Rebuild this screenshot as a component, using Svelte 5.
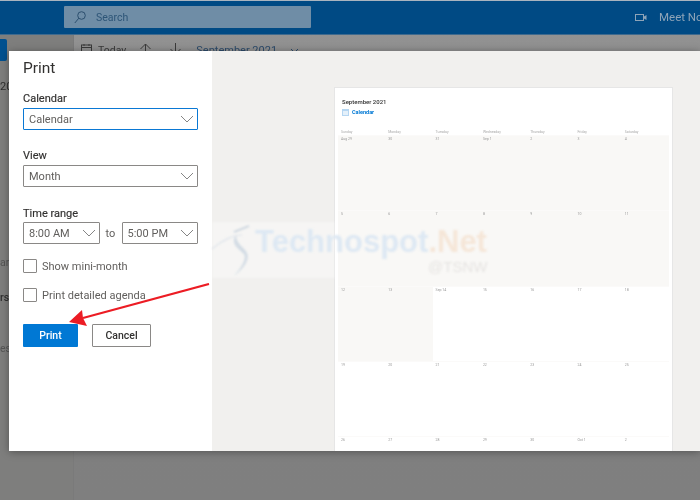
<script>
  const weekdays = ['Sunday', 'Monday', 'Tuesday', 'Wednesday', 'Thursday', 'Friday', 'Saturday'];
  const labels = [
    'Aug 29', '30', '31', 'Sep 1', '2', '3', '4',
    '5', '6', '7', '8', '9', '10', '11',
    '12', '13', 'Sep 14', '15', '16', '17', '18',
    '19', '20', '21', '22', '23', '24', '25',
    '26', '27', '28', '29', '30', 'Oct 1', '2'
  ];
  // days before today are shaded in the preview
  const days = labels.map((label, i) => ({ label, past: i < 16 }));
</script>

{#snippet chevron()}
  <svg class="chev" width="14" height="8" viewBox="0 0 14 8"><path d="M1 1l6 6 6-6" fill="none" stroke="#858585" stroke-width="1"/></svg>
{/snippet}

<div class="screen">
  <header class="topbar">
    <div class="search">
      <svg width="12" height="13" viewBox="0 0 12 13"><circle cx="7.5" cy="4.5" r="3.8" fill="none" stroke="#2c4f6e" stroke-width="1"/><path d="M4.8 7.2L0.8 12" stroke="#2c4f6e" stroke-width="1"/></svg>
      <span>Search</span>
    </div>
    <div class="meet">
      <svg width="12" height="9" viewBox="0 0 12 9"><rect x="0.5" y="1.5" width="8" height="6" fill="none" stroke="#8ea4b8"/><path d="M9 3.5l2.5-1.5v5L9 5.5z" fill="#8ea4b8"/></svg>
      <span>Meet Now</span>
    </div>
  </header>

  <div class="behind">
    <aside class="side">
      <div class="side-btn"></div>
      <span class="frag f1">20</span>
      <span class="frag f2">ar</span>
      <span class="frag f3">rs</span>
      <span class="frag f4">es</span>
    </aside>
    <div class="toolbar">
      <svg class="t-cal" width="11" height="12" viewBox="0 0 11 12"><rect x="0.5" y="2" width="10" height="9" fill="none" stroke="#3a3a3a"/><path d="M0.5 4.5h10M3 1v2M8 1v2" stroke="#3a3a3a"/></svg>
      <span class="today">Today</span>
      <svg class="t-up" width="11" height="12" viewBox="0 0 11 12"><path d="M5.5 12V1M0.5 6l5-5 5 5" fill="none" stroke="#3a3a3a"/></svg>
      <svg class="t-down" width="11" height="12" viewBox="0 0 11 12"><path d="M5.5 0v11M0.5 6l5 5 5-5" fill="none" stroke="#3a3a3a"/></svg>
      <span class="month">September 2021</span>
      <svg class="t-chev" width="9" height="6" viewBox="0 0 9 6"><path d="M1 1l3.5 3.5L8 1" fill="none" stroke="#2d4b6a"/></svg>
    </div>
  </div>

  <div class="modal">
    <form class="panel">
      <h1>Print</h1>

      <div class="label cal-label">Calendar</div>
      <div class="select focused"><span>Calendar</span>{@render chevron()}</div>

      <div class="label view-label">View</div>
      <div class="select"><span>Month</span>{@render chevron()}</div>

      <div class="label range-label">Time range</div>
      <div class="range">
        <div class="select"><span>8:00 AM</span>{@render chevron()}</div>
        <span class="to">to</span>
        <div class="select"><span>5:00 PM</span>{@render chevron()}</div>
      </div>

      <div class="check first"><i></i><span>Show mini-month</span></div>
      <div class="check"><i></i><span>Print detailed agenda</span></div>

      <div class="buttons">
        <button type="button" class="primary">Print</button>
        <button type="button" class="cancel">Cancel</button>
      </div>
    </form>

    <section class="preview">
      <div class="sheet">
        <div class="sheet-title">September 2021</div>
        <div class="sheet-cal">
          <svg width="7" height="7" viewBox="0 0 7 7"><rect width="7" height="7" fill="#b5d6f2"/><rect x="1" y="2" width="5" height="4" fill="#e4f0fa"/></svg>
          <span>Calendar</span>
        </div>
        <div class="weekdays">
          {#each weekdays as w}<span>{w}</span>{/each}
        </div>
        <div class="grid">
          {#each days as d}
            <div class="day" class:past={d.past}>{d.label}</div>
          {/each}
        </div>
      </div>
    </section>
  </div>

  <div class="watermark">
    <div class="wm-band"></div>
    <svg width="50" height="56" viewBox="0 0 50 56">
      <path d="M0 27C10 18 22 13 30 13" fill="none" stroke="#dde3ea" stroke-width="1.2"/>
      <path d="M37 4L22 10" fill="none" stroke="#c6d1dc" stroke-width="1.6"/>
      <path d="M24 13c-6 9 2 13 8 19 3 5-3 14-10 22 9-7 16-16 13-23-3-6-11-9-11-18z" fill="#d2dbe4"/>
    </svg>
    <span class="wm-text"><b class="wm-blue">Technospot</b><b class="wm-orange">.Net</b></span>
    <span class="wm-handle">@TSNW</span>
  </div>

  <svg class="arrow" width="150" height="60" viewBox="0 0 150 60">
    <path d="M140 1L14 35" stroke="#ec1c24" stroke-width="2.2" fill="none"/>
    <path d="M0 39L13 27L14 35L18 43z" fill="#ec1c24"/>
  </svg>
</div>

<style>
  :global(body) {
    margin: 0;
  }

  .screen {
    position: relative;
    width: 700px;
    height: 500px;
    overflow: hidden;
    background: #858585;
    font-family: Roboto, "Open Sans", sans-serif;
    color: #3b3a39;
    filter: blur(0.35px);
  }

  .topbar {
    box-sizing: border-box;
    height: 35px;
    background: #004a84;
    display: flex;
    align-items: center;
    justify-content: space-between;
    padding: 0 0 0 64px;
    border-top: 1px solid #a9b4bf;
    border-bottom: 1px solid #3f6a8e;
  }

  .search {
    width: 247px;
    height: 22px;
    background: #6f8da6;
    border-radius: 1px;
    display: flex;
    align-items: center;
    gap: 10px;
    padding-left: 10px;
    box-sizing: border-box;
    font-size: 10.5px;
    color: #2d5577;
    margin-top: -1px;
  }

  .meet {
    display: flex;
    align-items: center;
    gap: 12px;
    font-size: 11.5px;
    color: #8ea4b8;
    white-space: nowrap;
    width: 65px;
    overflow: hidden;
    flex: none;
    margin-top: -1px;
  }

  .meet svg {
    flex: none;
  }

  .behind {
    display: flex;
    height: 465px;
  }

  .side {
    position: relative;
    width: 73px;
    background: #7e7e7d;
    border-right: 1px solid #7a7a7a;
    flex: none;
  }

  .side-btn {
    position: absolute;
    left: 0;
    top: 4px;
    width: 7px;
    height: 22px;
    background: #00508f;
    border-radius: 0 2px 2px 0;
  }

  .frag {
    position: absolute;
    left: 0;
    font-size: 10.5px;
    color: #2f2f2f;
  }

  .f1 { top: 45px; font-size: 11px; }
  .f2 { top: 221px; color: #555; }
  .f3 { top: 256px; font-weight: 500; }
  .f4 { top: 307px; color: #555; }

  .toolbar {
    flex: 1;
    background: linear-gradient(#929292, #8a8a8a 60px, #808080 110px, #7f7f7f);
    display: flex;
    align-items: flex-start;
    padding: 8px 0 0 7px;
    font-size: 10.5px;
    color: #3a3a3a;
  }

  .today { margin-left: 6px; line-height: 12px; margin-top: 2px; }
  .t-up { margin-left: 14px; }
  .t-down { margin-left: 19px; }
  .month { margin-left: 15px; color: #2d4b6a; line-height: 12px; margin-top: 2px; font-size: 11px; }
  .t-chev { margin-left: 13px; margin-top: 5px; }

  .modal {
    position: absolute;
    left: 9px;
    top: 51px;
    width: 691px;
    height: 400px;
    display: flex;
    background: #f1f0ee;
    box-shadow: 0 1px 8px rgba(0, 0, 0, 0.35);
  }

  .panel {
    width: 203px;
    flex: none;
    background: #fff;
    box-sizing: border-box;
    padding: 7px 14px 0;
  }

  h1 {
    margin: 0;
    font-size: 15.5px;
    font-weight: 400;
    line-height: 20px;
    color: #323130;
  }

  .label {
    font-size: 11px;
    font-weight: 400;
    line-height: 14px;
    color: #323130;
    -webkit-text-stroke: 0.15px #323130;
  }

  .cal-label { margin-top: 14px; margin-bottom: 2px; }
  .view-label { margin-top: 19px; margin-bottom: 2px; }
  .range-label { margin-top: 20px; margin-bottom: 1px; }

  .select {
    height: 22px;
    box-sizing: border-box;
    border: 1px solid #8a8886;
    border-radius: 1px;
    display: flex;
    align-items: center;
    justify-content: space-between;
    padding: 0 3px 0 5px;
    font-size: 11px;
    color: #605e5c;
    background: #fff;
  }

  .select.focused {
    border: 1.5px solid #0a78d4;
  }

  .chev { flex: none; }

  .range {
    display: flex;
    align-items: center;
  }

  .range .select {
    flex: 1;
  }

  .to {
    width: 22px;
    text-align: center;
    font-size: 11px;
    color: #605e5c;
  }

  .check {
    display: flex;
    align-items: center;
    gap: 5px;
    height: 14px;
    margin-top: 15px;
    font-size: 11px;
    color: #605e5c;
  }

  .check i {
    width: 12px;
    height: 12px;
    border: 1px solid #8a8886;
    border-radius: 1px;
    flex: none;
  }

  .buttons {
    display: flex;
    gap: 14px;
    margin-top: 22px;
  }

  button {
    height: 23px;
    border-radius: 1px;
    font-family: inherit;
    font-size: 10.5px;
    font-weight: 500;
    padding: 0;
  }

  .primary {
    width: 55px;
    background: #0078d4;
    border: none;
    color: #fff;
  }

  .cancel {
    width: 59px;
    background: #fff;
    border: 1px solid #8a8886;
    color: #323130;
  }

  .preview {
    flex: 1;
    min-width: 0;
    overflow: hidden;
    padding: 36px 0 0 122px;
    box-sizing: border-box;
  }

  .sheet {
    width: 339px;
    height: 364px;
    box-sizing: border-box;
    background: #fff;
    border: 1px solid #e6e6e6;
    border-bottom: none;
    padding: 10px 3px 0;
    overflow: hidden;
  }

  .sheet-title {
    font-size: 6px;
    font-weight: 500;
    color: #333;
    padding-left: 4px;
    line-height: 8px;
  }

  .sheet-cal {
    display: flex;
    align-items: center;
    gap: 3px;
    padding-left: 4px;
    margin-top: 2px;
    font-size: 5.5px;
    font-weight: 700;
    color: #0078d4;
    line-height: 8px;
  }

  .weekdays {
    display: grid;
    grid-template-columns: repeat(7, 47.3px);
    margin-top: 13px;
  }

  .weekdays span {
    font-size: 3.5px;
    color: #aaa;
    line-height: 6px;
    padding-left: 3px;
  }

  .grid {
    display: grid;
    grid-template-columns: repeat(7, 47.3px);
    grid-auto-rows: 75.3px;
  }

  .day {
    font-size: 3.5px;
    color: #999;
    padding: 1px 3px;
    border-top: 1px solid #fbfaf9;
    box-sizing: border-box;
  }

  .day.past {
    background: #f9f8f6;
  }

  .watermark {
    position: absolute;
    left: 212px;
    top: 222px;
    width: 290px;
    height: 56px;
    pointer-events: none;
    filter: blur(0.8px);
  }

  .wm-band {
    position: absolute;
    left: 0;
    top: 0;
    width: 123px;
    height: 56px;
    background: rgba(255, 255, 255, 0.35);
  }

  .watermark svg {
    position: absolute;
    left: 0;
    top: 0;
  }

  .wm-text {
    position: absolute;
    left: 43px;
    top: 4px;
    font-family: "Liberation Sans", sans-serif;
    font-size: 31px;
    line-height: 32px;
    white-space: nowrap;
  }

  .wm-blue { color: #dde8f3; }
  .wm-orange { color: #f5e6d8; }

  .wm-handle {
    position: absolute;
    left: 216px;
    top: 37px;
    font-family: "Liberation Sans", sans-serif;
    font-size: 15px;
    line-height: 16px;
    color: #e6e4e2;
  }

  .arrow {
    position: absolute;
    left: 69px;
    top: 283px;
  }
</style>
